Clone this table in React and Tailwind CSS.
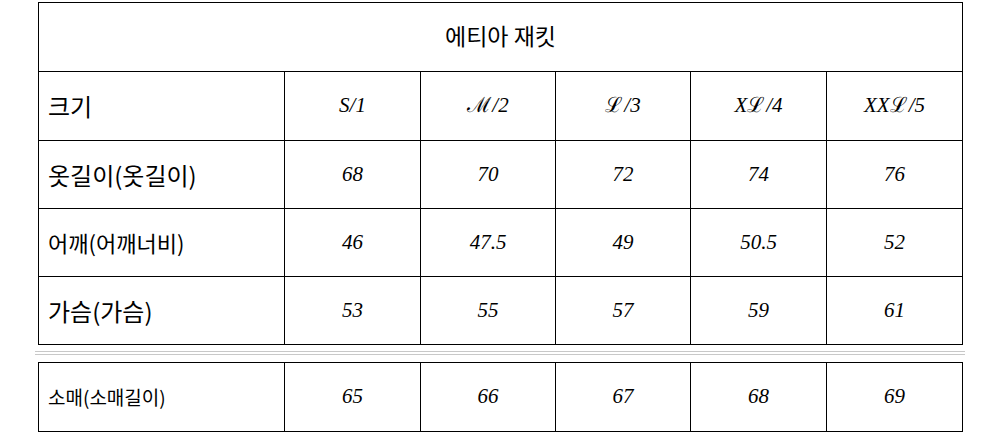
import React from "react";

const S = ({ children }) => <span className="not-italic mr-px">{children}</span>;

const sizes = [
  <>S/1</>,
  <><S>ℳ</S>/2</>,
  <><S>ℒ</S>/3</>,
  <>X<S>ℒ</S>/4</>,
  <>XX<S>ℒ</S>/5</>,
];

const rows = [
  { label: "옷길이(옷길이)", size: "text-[24px]", values: ["68", "70", "72", "74", "76"] },
  { label: "어깨(어깨너비)", size: "text-[22px]", values: ["46", "47.5", "49", "50.5", "52"] },
  { label: "가슴(가슴)", size: "text-[24px]", values: ["53", "55", "57", "59", "61"] },
];

const kr = { fontFamily: '"Noto Sans CJK KR", "Noto Sans", sans-serif' };
const num = { fontFamily: '"Liberation Serif", "DejaVu Serif", serif' };

const Cell = ({ children }) => (
  <td className="border border-black text-center italic text-[21px] text-black" style={num}>
    {children}
  </td>
);

const Cols = () => (
  <colgroup>
    <col className="w-[246px]" />
    <col className="w-[136px]" />
    <col className="w-[135px]" />
    <col className="w-[135px]" />
    <col className="w-[136px]" />
    <col className="w-[136px]" />
  </colgroup>
);

const App = () => {
  return (
    <div className="w-[1000px] h-[436px] bg-white overflow-hidden">
      <table className="ml-[38px] mt-[2px] border-collapse table-fixed w-[924px]">
        <Cols />
        <tbody>
          <tr className="h-[69px]">
            <td colSpan={6} className="border border-black text-center text-[23px] text-black pb-[3px]" style={kr}>
              에티아 재킷
            </td>
          </tr>
          <tr className="h-[69px]">
            <td className="border border-black pl-[9px] text-[24px] text-black" style={kr}>
              크기
            </td>
            {sizes.map((s, i) => (
              <Cell key={i}>{s}</Cell>
            ))}
          </tr>
          {rows.map((r) => (
            <tr key={r.label} className="h-[68px]">
              <td className={`border border-black pl-[9px] text-black ${r.size}`} style={kr}>
                {r.label}
              </td>
              {r.values.map((v, i) => (
                <Cell key={i}>{v}</Cell>
              ))}
            </tr>
          ))}
        </tbody>
      </table>

      {/* gray double line */}
      <div className="ml-[35px] w-[930px] mt-[6px] flex flex-col gap-[2px]">
        <div className="h-px bg-[#c8c8c8]" />
        <div className="h-px bg-[#c8c8c8]" />
      </div>

      <table className="ml-[38px] mt-[7px] border-collapse table-fixed w-[924px]">
        <Cols />
        <tbody>
          <tr className="h-[69px]">
            <td className="border border-black pl-[9px] text-[19px] text-black" style={kr}>
              소매(소매길이)
            </td>
            {["65", "66", "67", "68", "69"].map((v, i) => (
              <Cell key={i}>{v}</Cell>
            ))}
          </tr>
        </tbody>
      </table>
    </div>
  );
};

export default App;
